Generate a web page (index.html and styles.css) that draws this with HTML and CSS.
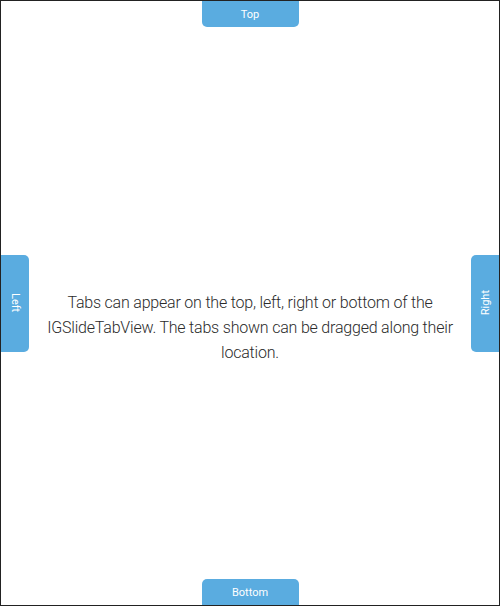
FILE: index.html
```html
<!DOCTYPE html>
<html>
<head>
<meta charset="utf-8">
<link rel="stylesheet" href="styles.css">
</head>
<body>
<div class="frame">
  <div class="tab tab-top">Top</div>
  <div class="tab tab-left"><span class="vlabel">Left</span></div>
  <div class="message">Tabs can appear on the top, left, right or bottom of the IGSlideTabView. The tabs shown can be dragged along their location.</div>
  <div class="tab tab-right"><span class="vlabel vlabel-up">Right</span></div>
  <div class="tab tab-bottom">Bottom</div>
</div>
</body>
</html>
```
FILE: styles.css
```css
html, body {
  margin: 0;
  padding: 0;
  background: #fff;
}
.frame {
  box-sizing: border-box;
  width: 500px;
  height: 606px;
  border: 1px solid #222;
  display: grid;
  grid-template-columns: 28px 1fr 28px;
  grid-template-rows: 26px 1fr 26px;
  font-family: Roboto, "Liberation Sans", sans-serif;
}
.tab {
  background: #5aace0;
  color: #fff;
  font-size: 11px;
  display: flex;
  align-items: center;
  justify-content: center;
}
.tab-top {
  grid-column: 2;
  grid-row: 1;
  justify-self: center;
  width: 97px;
  border-radius: 0 0 5px 5px;
}
.tab-bottom {
  grid-column: 2;
  grid-row: 3;
  justify-self: center;
  width: 97px;
  border-radius: 5px 5px 0 0;
}
.tab-left {
  grid-column: 1;
  grid-row: 2;
  align-self: center;
  height: 97px;
  border-radius: 0 5px 5px 0;
}
.tab-right {
  grid-column: 3;
  grid-row: 2;
  align-self: center;
  height: 97px;
  border-radius: 5px 0 0 5px;
}
.vlabel {
  writing-mode: vertical-rl;
}
.vlabel-up {
  transform: rotate(180deg);
}
.message {
  grid-column: 2;
  grid-row: 2;
  align-self: center;
  padding-top: 49px;
  text-align: center;
  font-size: 16px;
  font-weight: 300;
  letter-spacing: -0.2px;
  line-height: 25px;
  color: #2b2b2b;
}
```
